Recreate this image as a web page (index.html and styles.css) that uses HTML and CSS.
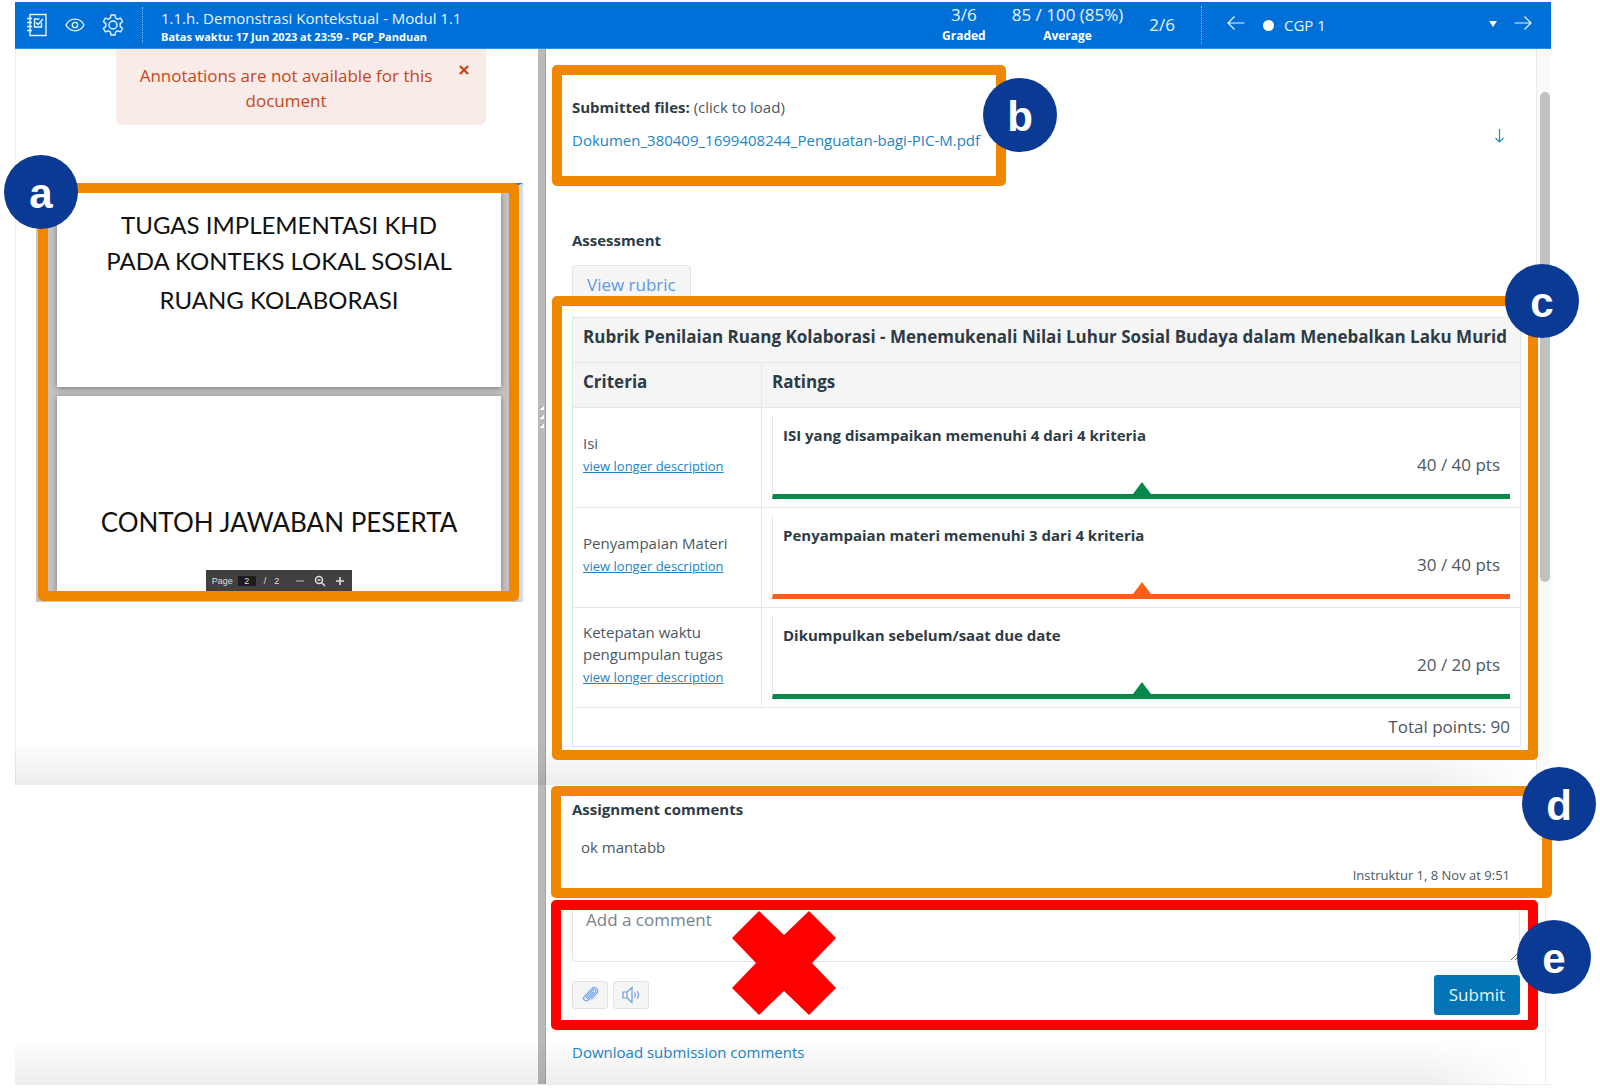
FILE: index.html
```html
<!DOCTYPE html>
<html lang="id">
<head>
<meta charset="utf-8">
<meta name="viewport" content="width=device-width, initial-scale=1">
<title>SpeedGrader - 1.1.h. Demonstrasi Kontekstual</title>
<link rel="stylesheet" href="styles.css">
</head>
<body>
<div class="app">
  <header class="topbar">
    <nav class="tools" aria-label="Tools">
      <button class="icon-btn" type="button" aria-label="Gradebook">
        <svg width="22" height="24" viewBox="0 0 22 24" fill="none" stroke="currentColor" stroke-width="1.4"><rect x="4" y="1.5" width="16" height="21"/><path d="M1 5.5h5M1 9.5h5M1 13.5h5M1 17.5h5"/><path d="M15.5 9.500v4.500h-7V6h5M10 9.500l2 2 5-5.500"/></svg>
      </button>
      <button class="icon-btn" type="button" aria-label="Visibility">
        <svg width="20" height="14" viewBox="0 0 20 14" fill="none" stroke="currentColor" stroke-width="1.3"><path d="M1 7C3 3 6.300 1.200 10 1.200S17 3 19 7c-2 4-5.300 5.800-9 5.800S3 11 1 7z"/><circle cx="10" cy="7" r="2.700"/></svg>
      </button>
      <button class="icon-btn" type="button" aria-label="Settings">
        <svg width="22" height="22" viewBox="0 0 22 22" fill="none" stroke="currentColor" stroke-width="1.4" stroke-linejoin="round"><path d="M9 1h4l.6 3 2 1.200 3-1.100 2 3.400-2.400 2.100v2.800l2.400 2.100-2 3.400-3-1.100-2 1.200L13 21H9l-.6-3-2-1.200-3 1.100-2-3.400 2.400-2.100V9.600L1.400 7.500l2-3.400 3 1.100 2-1.200z"/><circle cx="11" cy="11" r="4"/></svg>
      </button>
    </nav>
    <div class="assignment">
      <h1 class="assignment-title">1.1.h. Demonstrasi Kontekstual - Modul 1.1</h1>
      <p class="assignment-due">Batas waktu: 17 Jun 2023 at 23:59 - PGP_Panduan</p>
    </div>
    <dl class="stats">
      <div class="stat"><dd>3/6</dd><dt>Graded</dt></div>
      <div class="stat"><dd>85 / 100 (85%)</dd><dt>Average</dt></div>
    </dl>
    <span class="position">2/6</span>
    <div class="student-nav">
      <button class="icon-btn step" type="button" aria-label="Previous student">
        <svg width="18" height="16" viewBox="0 0 18 16" fill="none" stroke="currentColor" stroke-width="1.2"><path d="M17.500 8H1M7.500 1.500L1 8l6.500 6.500"/></svg>
      </button>
      <span class="dot"></span>
      <select class="student" aria-label="Student"><option>CGP 1</option></select>
      <button class="icon-btn step" type="button" aria-label="Next student">
        <svg width="18" height="16" viewBox="0 0 18 16" fill="none" stroke="currentColor" stroke-width="1.2"><path d="M.5 8H17M10.500 1.500L17 8l-6.500 6.500"/></svg>
      </button>
    </div>
  </header>

  <main>
    <div class="band band-top">
      <section class="document">
        <div class="alert" role="alert">
          <p>Annotations are not available for this document</p>
          <button class="alert-close" type="button" aria-label="Close">
            <svg width="10" height="10" viewBox="0 0 10 10" stroke="currentColor" stroke-width="2.400"><path d="M1 1l8 8M9 1L1 9"/></svg>
          </button>
        </div>
        <div class="viewer">
          <div class="sheet sheet-first">
            <p>TUGAS IMPLEMENTASI KHD</p>
            <p>PADA KONTEKS LOKAL SOSIAL</p>
            <p class="spaced">RUANG KOLABORASI</p>
          </div>
          <div class="sheet sheet-second">
            <p>CONTOH JAWABAN PESERTA</p>
            <div class="pager">
              <label for="page">Page</label>
              <input id="page" value="2">
              <span>/</span>
              <span class="pager-total">2</span>
              <button type="button" aria-label="Zoom out"><svg width="10" height="10" viewBox="0 0 10 10" stroke="#999" stroke-width="1.400"><path d="M1 5h8"/></svg></button>
              <button type="button" aria-label="Reset zoom"><svg width="12" height="12" viewBox="0 0 12 12" fill="none" stroke="currentColor" stroke-width="1.500"><circle cx="5" cy="5" r="3.500"/><path d="M7.500 7.500L11 11M3.500 5h3" /></svg></button>
              <button type="button" aria-label="Zoom in"><svg width="10" height="10" viewBox="0 0 10 10" stroke="currentColor" stroke-width="1.600"><path d="M1 5h8M5 1v8"/></svg></button>
            </div>
          </div>
          <div class="frame-over"><span class="badge badge-a">a</span></div>
        </div>
      </section>
      <div class="splitter"><i></i><i></i><i></i></div>
      <section class="grading">
        <div class="files">
          <div class="frame frame-files">
            <p><strong>Submitted files:</strong> (click to load)</p>
            <a class="file" href="#file">Dokumen_380409_1699408244_Penguatan-bagi-PIC-M.pdf</a>
            <span class="badge badge-b">b</span>
          </div>
          <a class="download" href="#download" aria-label="Download file">
            <svg width="11" height="14" viewBox="0 0 11 14" fill="none" stroke="currentColor" stroke-width="1.200"><path d="M5.500 0v13M1.500 9l4 4 4-4"/></svg>
          </a>
        </div>
        <h2 class="assess-title">Assessment</h2>
        <button class="view-rubric" type="button">View rubric</button>
        <div class="frame frame-rubric">
          <table class="rubric">
            <colgroup><col class="col-criteria"><col></colgroup>
            <thead>
              <tr><th colspan="2">Rubrik Penilaian Ruang Kolaborasi - Menemukenali Nilai Luhur Sosial Budaya dalam Menebalkan Laku Murid</th></tr>
              <tr><th>Criteria</th><th>Ratings</th></tr>
            </thead>
            <tbody>
              <tr>
                <td class="criterion">Isi<br><a href="#isi">view longer description</a></td>
                <td><div class="rating full"><strong>ISI yang disampaikan memenuhi 4 dari 4 kriteria</strong><span>40 / 40 pts</span></div></td>
              </tr>
              <tr>
                <td class="criterion">Penyampaian Materi<br><a href="#materi">view longer description</a></td>
                <td><div class="rating part"><strong>Penyampaian materi memenuhi 3 dari 4 kriteria</strong><span>30 / 40 pts</span></div></td>
              </tr>
              <tr>
                <td class="criterion">Ketepatan waktu pengumpulan tugas<br><a href="#waktu">view longer description</a></td>
                <td><div class="rating full"><strong>Dikumpulkan sebelum/saat due date</strong><span>20 / 20 pts</span></div></td>
              </tr>
            </tbody>
            <tfoot><tr><td class="total" colspan="2">Total points: 90</td></tr></tfoot>
          </table>
          <span class="badge badge-c">c</span>
        </div>
      </section>
      <div class="scroll-track"><div class="scroll-thumb"></div></div>
    </div>

    <div class="band band-bottom">
      <div></div>
      <div class="splitter"></div>
      <section class="comments">
        <div class="frame frame-comments">
          <h2>Assignment comments</h2>
          <p class="comment">ok mantabb</p>
          <p class="comment-meta">Instruktur 1, 8 Nov at 9:51</p>
          <span class="badge badge-d">d</span>
        </div>
        <form class="frame frame-form">
          <textarea class="comment-box" aria-label="Add a comment" placeholder="Add a comment"></textarea>
          <div class="form-row">
            <button class="mini" type="button" aria-label="Attach file">
              <svg width="18" height="18" viewBox="0 0 18 18" fill="none" stroke="currentColor" stroke-width="1.100" stroke-linecap="round"><path d="M12.500 6L6.800 11.900c-.9.900-2.200-.3-1.300-1.300L11.700 4.200c1.800-1.700 4.200.6 2.500 2.500l-7 7.300c-2.600 2.500-6.200-.9-3.700-3.600l7.200-7.600c3.400-3.200 8.200 1.200 5 4.700l-5 5.300"/></svg>
            </button>
            <button class="mini" type="button" aria-label="Record media">
              <svg width="18" height="18" viewBox="0 0 18 18" fill="none" stroke="currentColor" stroke-width="1.200"><path d="M1 6h4v6H1zM5 6l5-4.500v15L5 12M12.500 6.500c1 1.500 1 3.500 0 5M15 5c1.800 2.400 1.800 5.600 0 8"/></svg>
            </button>
            <button class="submit" type="button">Submit</button>
          </div>
          <svg class="cross" width="104" height="104" viewBox="0 0 104 104"><path fill="#f00" d="M27 0l25 24L77 0l27 27-24 25 24 25-27 27-25-24-25 24L0 77l24-25L0 27z"/></svg>
          <span class="badge badge-e">e</span>
        </form>
        <a class="download-all" href="#comments">Download submission comments</a>
      </section>
      <div class="edge"></div>
    </div>
  </main>
</div>
</body>
</html>
```

FILE: styles.css
```css
* { box-sizing: border-box; }
body { margin: 0; background: #fff; color: #4c5860; font: 16px/20px "Open Sans", "Noto Sans", sans-serif; }
h1, h2, p, dl, dd { margin: 0; }
button, select, input, textarea { font: inherit; color: inherit; }
button { border: 0; padding: 0; background: none; cursor: pointer; }
svg { display: block; }
a { color: #2284c5; text-decoration: none; }
strong, h2 { color: #2d3b45; font-weight: 700; }
h2 { font-size: 15px; line-height: 20px; }

.app { margin: 2px 49px 0 15px; }

/* Top bar */
.topbar { display: flex; align-items: center; height: 47px; background: #0070d8; color: #eaf4ff; border-bottom: 1px solid #2f8be4; }
.tools { display: flex; align-items: center; gap: 17px; height: 36px; padding: 0 18px 0 11px; border-right: 1px dotted #7db8f0; }
.assignment { flex: 1; padding: 4px 0 0 18px; }
.assignment-title { font-size: 15px; line-height: 20px; font-weight: 400; }
.assignment-due { font-size: 11px; line-height: 18px; font-weight: 700; color: #fff; }
.stats { display: flex; gap: 26px; text-align: center; }
.stat { display: flex; flex-direction: column; }
.stat dd, .position { font-size: 17px; line-height: 22px; }
.stat dt { font-size: 12px; line-height: 20px; font-weight: 700; color: #fff; }
.position { padding: 0 26px; }
.student-nav { position: relative; display: flex; align-items: center; height: 38px; padding: 0 19px 0 25px; border-left: 1px dotted #7db8f0; }
.student-nav::after { content: ""; position: absolute; right: 54px; top: 15px; border: 4px solid transparent; border-top: 6px solid #fff; border-bottom: 0; pointer-events: none; }
.step { padding-bottom: 4px; }
.dot { width: 11px; height: 11px; margin: 0 10px 0 18px; border-radius: 50%; background: #fff; }
.student { appearance: none; width: 216px; margin-right: 14px; padding: 0; border: 0; background: none; font-size: 15px; }

/* Stacked bands */
.band { position: relative; display: grid; grid-template-columns: 523fr 8px 990fr 15px; }
.band::after { content: ""; position: absolute; left: 0; right: 20px; bottom: 0; height: 44px; background: linear-gradient(transparent, rgba(0, 0, 0, .07)); mask-image: linear-gradient(to right, #000 93%, transparent); pointer-events: none; }
.band-top { box-shadow: inset 1px 0 #eee; }
.band-bottom { border-bottom: 1px solid #eee; }
.splitter { display: flex; flex-direction: column; align-items: center; justify-content: center; gap: 5px; background: #bababa; border-right: 1px solid #a4a4a4; }
.splitter i { width: 4px; height: 4px; background: linear-gradient(135deg, #9fb2c8 50%, #fff 50%); }
.scroll-track { padding: 43px 1px 0 3px; background: #fafafa; border-left: 1px solid #eaeaea; }
.scroll-thumb { height: 490px; border-radius: 5px; background: #c1c1c1; }
.edge { margin-right: 5px; border-right: 1px solid #eee; }

/* Document pane */
.alert { display: flex; align-items: flex-start; margin: 0 52px 0 101px; padding: 14px 17px 12px 19px; border-radius: 0 0 6px 6px; background: #f9ebe8; color: #c8451c; font-size: 17px; line-height: 25px; text-align: center; }
.alert p { flex: 1; padding-right: 22px; }
.alert-close { padding-top: 2px; }
.viewer { position: relative; margin: 58px 15px 0 21px; padding: 8px 18px 11px 21px; background: #c4c4c4; border-top: 2px solid #1a6fdc; border-right: 4px solid #cfdcec; }
.sheet { display: flex; flex-direction: column; align-items: center; background: #fff; box-shadow: 0 1px 6px #777; color: #111; font-family: Lato, "Open Sans", sans-serif; white-space: nowrap; }
.sheet-first { height: 194px; padding-top: 14px; font-size: 24px; line-height: 36px; }
.spaced { padding-top: 3px; }
.sheet-second { height: 195px; margin-top: 9px; padding-top: 108px; font-size: 26px; line-height: 36px; }
.pager { display: flex; align-items: center; gap: 8px; height: 21px; margin-top: auto; padding: 0 6px; background: #404040; color: #ddd; font: 9px/12px "Liberation Sans", sans-serif; }
.pager input { width: 18px; height: 10px; padding: 0; border: 0; margin-left: -3px; background: #1c1c1c; text-align: center; }
.pager-total { padding-right: 8px; }
.pager button { margin-right: 1px; }

/* Callout frames and their letters */
.frame { position: relative; z-index: 2; border: 10px solid #f08700; border-radius: 5px; }
.frame-over { position: absolute; inset: -2px 0 1px 2px; border: 10px solid #f08700; border-radius: 5px; }
.badge { position: absolute; z-index: 3; width: 74px; height: 74px; border-radius: 50%; background: #0a3a94; color: #fff; font: 700 42px/78px "Liberation Sans", Arial, sans-serif; text-align: center; }
.badge-a { left: -44px; top: -38px; }
.badge-b { right: -61px; top: 3px; }
.badge-c { right: -51px; top: -42px; }
.badge-d { right: -54px; top: -29px; }
.badge-e { right: -63px; top: 10px; }

/* Grading pane */
.grading { padding: 16px 15px 25px 26px; }
.files { display: flex; align-items: center; justify-content: space-between; padding-right: 16px; }
.download { padding-top: 20px; }
.frame-files { margin-left: -20px; padding: 22px 16px 26px 10px; font-size: 15px; }
.file { display: block; margin-top: 13px; }
.assess-title { margin-top: 44px; }
.view-rubric { display: block; height: 40px; margin-top: 15px; padding: 0 14px; border: 1px solid #e2e5e8; border-radius: 3px; background: #f5f5f5; color: #5c98e6; font-size: 17px; }
.frame-rubric { margin: -9px -17px 0 -20px; padding: 11px 7px 3px 10px; background: #fff; }
.rubric { width: 100%; table-layout: fixed; border-collapse: collapse; }
.col-criteria { width: 189px; }
.rubric th, .rubric td { padding: 8px 10px; border: 1px solid #e3e7ea; text-align: left; }
.rubric th { padding: 7px 10px 13px; background: #f5f5f5; color: #2d3b45; font-size: 17px; line-height: 24px; white-space: nowrap; }
.rubric .criterion { line-height: 22px; padding-bottom: 14px; font-size: 15px; }
.criterion a { font-size: 13px; text-decoration: underline; }
.rating { position: relative; display: flex; flex-direction: column; justify-content: space-between; height: 83px; padding: 9px 10px 19px; border-left: 1px solid #e3e7ea; border-bottom: 5px solid; }
.rating::after { content: ""; position: absolute; left: 50%; bottom: 0; margin-left: -9px; border: 9px solid transparent; border-bottom: 12px solid; border-top: 0; }
.rating strong { font-size: 15px; }
.rating span { align-self: flex-end; font-size: 17px; color: #4c5860; }
.full { border-bottom-color: #06884a; }
.full::after { border-bottom-color: #06884a; }
.part { border-bottom-color: #fc5e13; }
.part::after { border-bottom-color: #fc5e13; }
.rubric .total { padding: 9px 10px; text-align: right; font-size: 17px; }

/* Comments */
.comments { padding: 1px 15px 22px 26px; }
.frame-comments { margin: 0 -31px 0 -21px; padding: 3px 32px 4px 11px; }
.comment { margin-top: 18px; padding-left: 9px; font-size: 15px; }
.comment-meta { margin-top: 9px; font-size: 13px; line-height: 18px; text-align: right; }
.frame-form { margin: 2px -17px 12px -21px; padding: 0 8px 5px 11px; border-color: #f00; }
.comment-box { display: block; width: 100%; height: 52px; padding: 0 13px; border: 1px solid #e3e7ea; border-top: 0; border-radius: 0 0 4px 4px; background: #fff; font-size: 17px; line-height: 20px; }
.comment-box::placeholder { color: #77828a; opacity: 1; }
.form-row { display: flex; align-items: center; gap: 5px; margin-top: 13px; }
.mini { display: grid; place-items: center; width: 36px; height: 28px; border: 1px solid #dfe3e6; border-radius: 3px; background: #f5f5f5; color: #6b9fe8; }
.submit { height: 40px; margin-left: auto; padding: 0 15px; border-radius: 3px; background: #0374b5; color: #e8f4fb; font-size: 17px; }
.cross { position: absolute; left: 171px; top: 1px; }
.download-all { font-size: 15px; }
```
